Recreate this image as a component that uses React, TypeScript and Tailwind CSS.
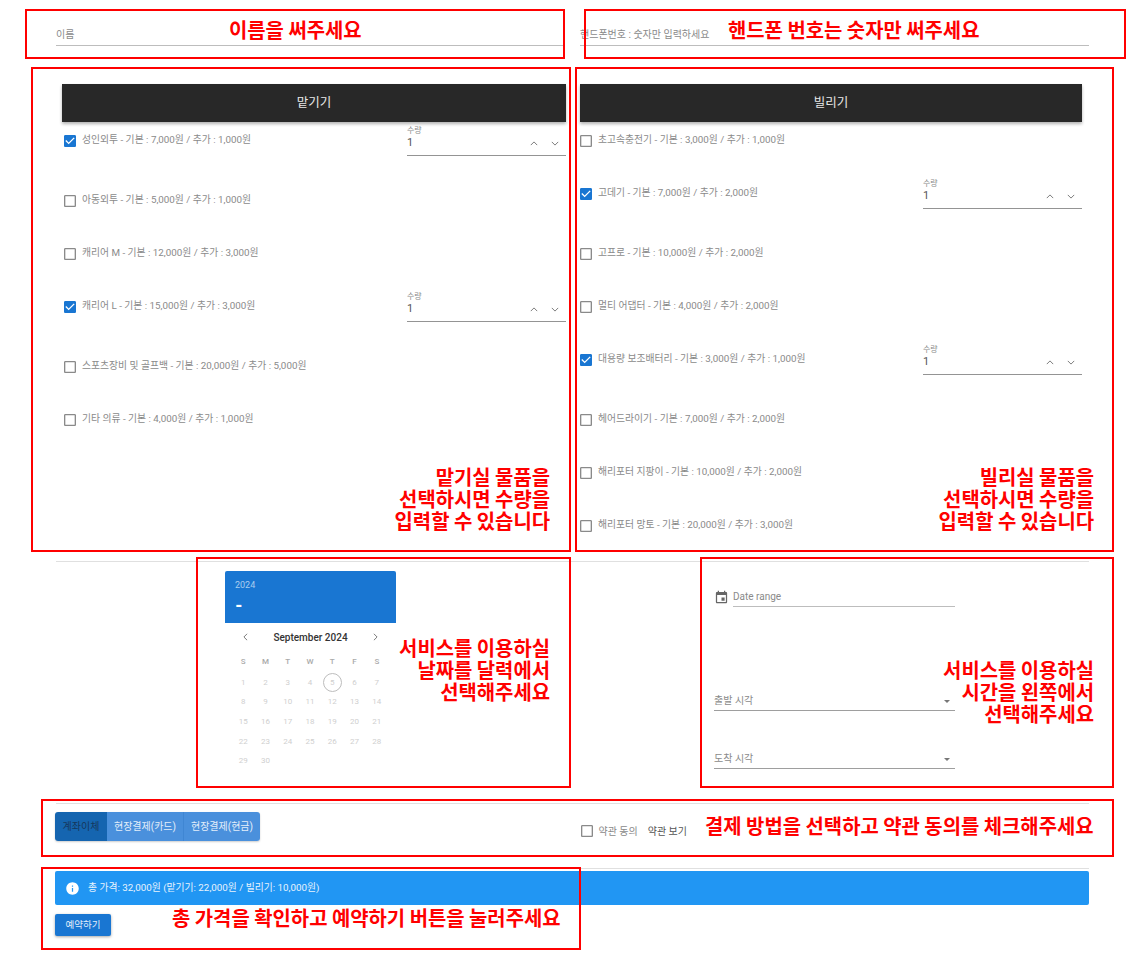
const storeItems = [
  { label: "성인외투 - 기본 : 7,000원 / 추가 : 1,000원", checked: true },
  { label: "아동외투 - 기본 : 5,000원 / 추가 : 1,000원", checked: false },
  { label: "캐리어 M - 기본 : 12,000원 / 추가 : 3,000원", checked: false },
  { label: "캐리어 L - 기본 : 15,000원 / 추가 : 3,000원", checked: true },
  { label: "스포츠장비 및 골프백 - 기본 : 20,000원 / 추가 : 5,000원", checked: false },
  { label: "기타 의류 - 기본 : 4,000원 / 추가 : 1,000원", checked: false },
];

const rentItems = [
  { label: "초고속충전기 - 기본 : 3,000원 / 추가 : 1,000원", checked: false },
  { label: "고데기 - 기본 : 7,000원 / 추가 : 2,000원", checked: true },
  { label: "고프로 - 기본 : 10,000원 / 추가 : 2,000원", checked: false },
  { label: "멀티 어댑터 - 기본 : 4,000원 / 추가 : 2,000원", checked: false },
  { label: "대용량 보조배터리 - 기본 : 3,000원 / 추가 : 1,000원", checked: true },
  { label: "헤어드라이기 - 기본 : 7,000원 / 추가 : 2,000원", checked: false },
  { label: "해리포터 지팡이 - 기본 : 10,000원 / 추가 : 2,000원", checked: false },
  { label: "해리포터 망토 - 기본 : 20,000원 / 추가 : 3,000원", checked: false },
];

const weekDays = ["S", "M", "T", "W", "T", "F", "S"];
const days = Array.from({ length: 30 }, (_, i) => i + 1);

const boxes = [
  "left-[25px] top-[9px] w-[540px] h-[50px]",
  "left-[584px] top-[9px] w-[542px] h-[50px]",
  "left-[31px] top-[67px] w-[540px] h-[485px]",
  "left-[575px] top-[67px] w-[539px] h-[485px]",
  "left-[196px] top-[557px] w-[375px] h-[231px]",
  "left-[700px] top-[557px] w-[414px] h-[231px]",
  "left-[41px] top-[799px] w-[1073px] h-[58px]",
  "left-[41px] top-[867px] w-[540px] h-[83px]",
];

const notes = [
  { cls: "left-[229px] top-[19px]", lines: ["이름을 써주세요"] },
  { cls: "left-[728px] top-[19px]", lines: ["핸드폰 번호는 숫자만 써주세요"] },
  { cls: "right-[597px] top-[466px] text-right", lines: ["맡기실 물품을", "선택하시면 수량을", "입력할 수 있습니다"] },
  { cls: "right-[53px] top-[466px] text-right", lines: ["빌리실 물품을", "선택하시면 수량을", "입력할 수 있습니다"] },
  { cls: "right-[597px] top-[637px] text-right", lines: ["서비스를 이용하실", "날짜를 달력에서", "선택해주세요"] },
  { cls: "right-[53px] top-[659px] text-right", lines: ["서비스를 이용하실", "시간을 왼쪽에서", "선택해주세요"] },
  { cls: "left-[705px] top-[815px]", lines: ["결제 방법을 선택하고 약관 동의를 체크해주세요"] },
  { cls: "left-[172px] top-[907px]", lines: ["총 가격을 확인하고 예약하기 버튼을 눌러주세요"] },
];

function Check({ checked }: { checked: boolean }) {
  return (
    <svg viewBox="0 0 24 24" className={checked ? "w-4 h-4 shrink-0 fill-[#1976d2]" : "w-4 h-4 shrink-0 fill-[#8a8a8a]"}>
      {checked ? (
        <path d="M19 3H5c-1.11 0-2 .9-2 2v14c0 1.1.89 2 2 2h14c1.11 0 2-.9 2-2V5c0-1.1-.89-2-2-2zm-9 14l-5-5 1.41-1.41L10 14.17l7.59-7.59L19 8l-9 9z" />
      ) : (
        <path d="M19 5v14H5V5h14m0-2H5c-1.1 0-2 .9-2 2v14c0 1.1.9 2 2 2h14c1.1 0 2-.9 2-2V5c0-1.1-.9-2-2-2z" />
      )}
    </svg>
  );
}

function QtyField() {
  return (
    <div className="w-[159px] h-[33px] mt-[1px] border-b border-[#949494] relative">
      <div className="text-[8px] leading-[10px] pt-[3px] text-[#8a8a8a]">수량</div>
      <div className="flex items-center justify-between pr-[7px] h-[14px] text-[11px] text-[#555]">
        <span>1</span>
        <span className="flex items-center gap-[13px] text-[#777]">
          <svg viewBox="0 0 10 6" className="w-[8px] h-[5px] fill-none stroke-current stroke-[1.2]">
            <path d="M1 5l4-4 4 4" />
          </svg>
          <svg viewBox="0 0 10 6" className="w-[8px] h-[5px] fill-none stroke-current stroke-[1.2]">
            <path d="M1 1l4 4 4-4" />
          </svg>
        </span>
      </div>
    </div>
  );
}

function ItemRow({ label, checked }: { label: string; checked: boolean }) {
  return (
    <div className={checked ? "h-[60px] flex justify-between" : "h-[53px] flex justify-between"}>
      <div className="flex items-start gap-[4px] pt-[11px]">
        <Check checked={checked} />
        <span className="text-[9.8px] leading-[14px] text-[#8a8a8a]">{label}</span>
      </div>
      {checked && <QtyField />}
    </div>
  );
}

function ItemColumn({ title, items, cls, listCls }: { title: string; items: typeof storeItems; cls: string; listCls: string }) {
  return (
    <div className={cls}>
      <div className="h-[38px] flex items-center justify-center bg-[#282828] text-[12.5px] text-[#e8e8e8] shadow-[0_2px_3px_rgba(0,0,0,0.3)]">
        {title}
      </div>
      <div className={listCls}>
        {items.map((item) => (
          <ItemRow key={item.label} {...item} />
        ))}
      </div>
    </div>
  );
}

function Calendar() {
  return (
    <div className="w-[171px] ml-[225px] mt-[9px]">
      <div className="h-[52px] bg-[#1976d2] rounded-t-[2px] pl-[10px] pt-[8px]">
        <div className="text-[9px] leading-[12px] text-[#a9cdf0]">2024</div>
        <div className="mt-[5px] text-[17px] leading-[18px] font-black text-white">-</div>
      </div>
      <div className="h-[28px] flex items-center justify-between px-[18px] text-[#777]">
        <svg viewBox="0 0 6 10" className="w-[5px] h-[8px] fill-none stroke-current stroke-[1.2]">
          <path d="M5 1L1 5l4 4" />
        </svg>
        <span className="text-[10px] font-medium text-[#333]">September 2024</span>
        <svg viewBox="0 0 6 10" className="w-[5px] h-[8px] fill-none stroke-current stroke-[1.2]">
          <path d="M1 1l4 4-4 4" />
        </svg>
      </div>
      <div className="grid grid-cols-7 w-[156px] ml-[7px] h-[22px] items-center text-center text-[8px] font-medium text-[#aaa]">
        {weekDays.map((d, i) => (
          <span key={i}>{d}</span>
        ))}
      </div>
      <div className="grid grid-cols-7 w-[156px] ml-[7px] auto-rows-[19.6px] items-center justify-items-center text-[8px] text-[#cfcfcf]">
        {days.map((d) =>
          d === 5 ? (
            <span key={d} className="w-[19px] h-[19px] rounded-full border border-[#bdbdbd] flex items-center justify-center">
              {d}
            </span>
          ) : (
            <span key={d}>{d}</span>
          ),
        )}
      </div>
    </div>
  );
}

function SelectField({ label, cls }: { label: string; cls: string }) {
  return (
    <div className={cls}>
      <span className="text-[10px] text-[#8a8a8a]">{label}</span>
      <span className="mr-[5px] mt-[2px] border-x-[3px] border-t-[3px] border-x-transparent border-t-[#777]" />
    </div>
  );
}

export default function App() {
  return (
    <div className="relative w-[1147px] h-[961px] bg-white overflow-hidden font-[Roboto,'Noto_Sans_CJK_KR',sans-serif]">
      <div className="flex pl-[56px] gap-[16px]">
        <div className="w-[508px] h-[46px] border-b border-[#bdbdbd] flex items-end pb-[3px] text-[10px] text-[#8a8a8a]">이름</div>
        <div className="w-[509px] h-[46px] border-b border-[#bdbdbd] flex items-end pb-[3px] text-[10px] text-[#8a8a8a]">
          핸드폰번호 : 숫자만 입력하세요
        </div>
      </div>

      <div className="flex h-[515px] pt-[38px]">
        <ItemColumn title="맡기기" items={storeItems} cls="ml-[62px] w-[504px]" listCls="" />
        <ItemColumn title="빌리기" items={rentItems} cls="ml-[14px] w-[502px]" listCls="ml-[-2px]" />
      </div>

      <div className="ml-[56px] w-[1033px] h-px bg-[#e0e0e0]" />

      <div className="flex h-[241px]">
        <Calendar />
        <div className="ml-[318px] w-[241px] pt-[27px]">
          <div className="flex items-center h-[18px]">
            <svg viewBox="0 0 24 24" className="w-[15px] h-[15px] mt-[-2px] mr-[4px] fill-[#666]">
              <path d="M17 12h-5v5h5v-5zM16 1v2H8V1H6v2H5c-1.11 0-1.99.9-1.99 2L3 19c0 1.1.89 2 2 2h14c1.1 0 2-.9 2-2V5c0-1.1-.9-2-2-2h-1V1h-2zm3 18H5V8h14v11z" />
            </svg>
            <span className="flex-1 h-[18px] border-b border-[#bdbdbd] text-[10px] leading-[15px] text-[#8a8a8a]">Date range</span>
          </div>
          <SelectField label="출발 시각" cls="mt-[84px] h-[20px] flex items-center justify-between border-b border-[#9e9e9e]" />
          <SelectField label="도착 시각" cls="mt-[38px] h-[20px] flex items-center justify-between border-b border-[#9e9e9e]" />
        </div>
      </div>

      <div className="ml-[56px] w-[1033px] h-px bg-[#e0e0e0]" />

      <div className="flex items-start justify-between ml-[55px] w-[1034px] h-[64px] pt-[8px]">
        <div className="flex h-[29px] rounded-[3px] overflow-hidden text-[10px] text-[#e3eefa] shadow-[0_1px_2px_rgba(0,0,0,0.2)]">
          <span className="w-[52px] flex items-center justify-center bg-[#1565b0] text-[#16375c]">계좌이체</span>
          <span className="w-[77px] flex items-center justify-center bg-[#4a90dc] border-r border-[#3f86d3]">현장결제(카드)</span>
          <span className="w-[76px] flex items-center justify-center bg-[#4a90dc]">현장결제(현금)</span>
        </div>
        <div className="flex items-center mt-[11px] mr-[402px] text-[10px]">
          <Check checked={false} />
          <span className="ml-[3px] text-[#8a8a8a]">약관 동의</span>
          <span className="ml-[10px] text-[#555]">약관 보기</span>
        </div>
      </div>

      <div className="ml-[56px] w-[1033px] h-px bg-[#e0e0e0]" />

      <div className="ml-[55px] mt-[2px] w-[1034px] h-[34px] rounded-[2px] bg-[#2196f3] flex items-center pl-[10px] text-[9.8px] text-[#e8f3fd]">
        <svg viewBox="0 0 24 24" className="w-[15px] h-[15px] mr-[8px] fill-white">
          <path d="M12 2C6.48 2 2 6.48 2 12s4.48 10 10 10 10-4.48 10-10S17.52 2 12 2zm1 15h-2v-6h2v6zm0-8h-2V7h2v2z" />
        </svg>
        총 가격: 32,000원 (맡기기: 22,000원 / 빌리기: 10,000원)
      </div>
      <button className="ml-[55px] mt-[9px] w-[56px] h-[22px] rounded-[2px] bg-[#1976d2] text-[9.5px] text-[#e3eefa] shadow-[0_1px_3px_rgba(0,0,0,0.35)] flex items-center justify-center">
        예약하기
      </button>

      {boxes.map((b) => (
        <div key={b} className={"absolute border-2 border-[#ff0000] pointer-events-none " + b} />
      ))}
      {notes.map((n) => (
        <div
          key={n.cls}
          className={"absolute whitespace-nowrap text-[#ff0000] text-[19.9px] leading-[22px] font-bold font-['Noto_Sans_CJK_KR',sans-serif] " + n.cls}
        >
          {n.lines.map((l) => (
            <div key={l}>{l}</div>
          ))}
        </div>
      ))}
    </div>
  );
}
